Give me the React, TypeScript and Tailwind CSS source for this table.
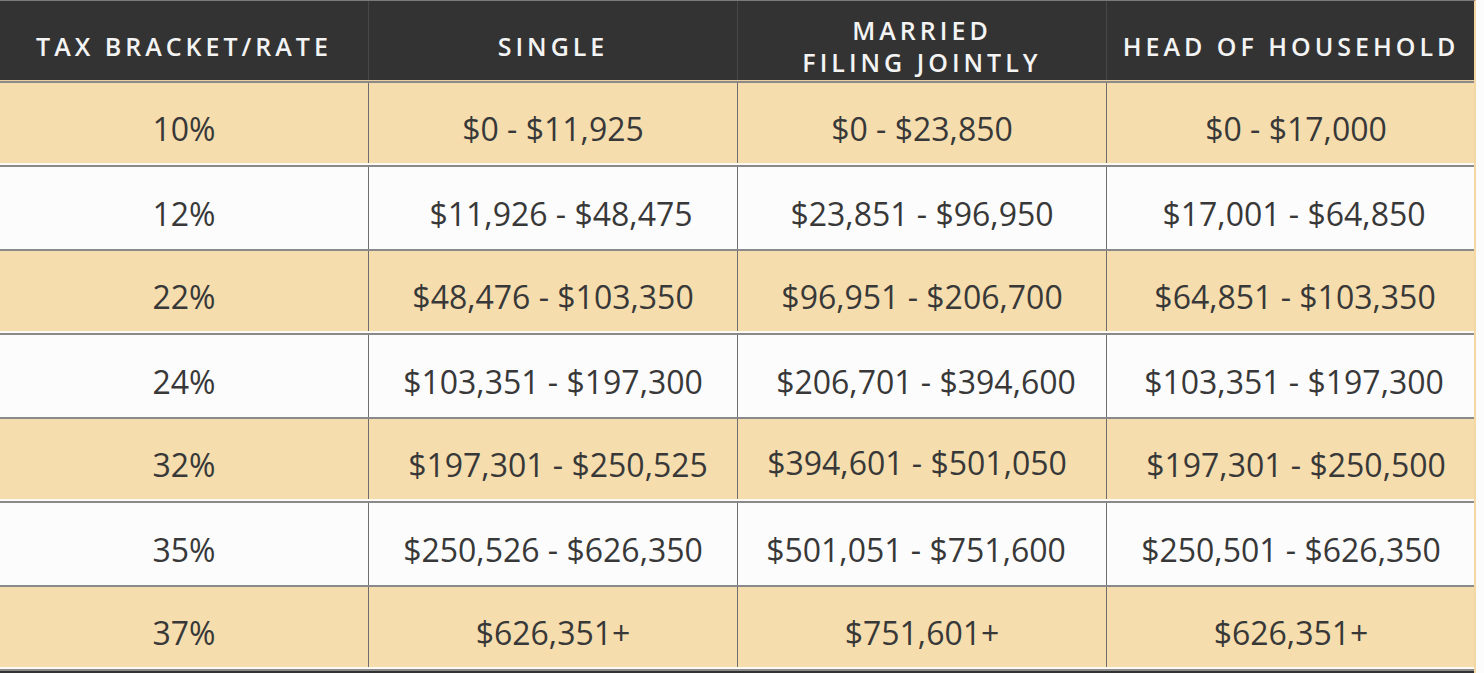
const headers: string[][] = [
  ['TAX BRACKET/RATE'],
  ['SINGLE'],
  ['MARRIED', 'FILING JOINTLY'],
  ['HEAD OF HOUSEHOLD'],
];

const rows: string[][] = [
  ['10%', '$0 - $11,925', '$0 - $23,850', '$0 - $17,000'],
  ['12%', '$11,926 - $48,475', '$23,851 - $96,950', '$17,001 - $64,850'],
  ['22%', '$48,476 - $103,350', '$96,951 - $206,700', '$64,851 - $103,350'],
  ['24%', '$103,351 - $197,300', '$206,701 - $394,600', '$103,351 - $197,300'],
  ['32%', '$197,301 - $250,525', '$394,601 - $501,050', '$197,301 - $250,500'],
  ['35%', '$250,526 - $626,350', '$501,051 - $751,600', '$250,501 - $626,350'],
  ['37%', '$626,351+', '$751,601+', '$626,351+'],
];

// small nudges so the figures sit where they do in the source sheet
const nudge: Record<string, string> = {
  '1-1': 'pl-[16px]',
  '4-1': 'pl-[10px]',
  '3-2': 'pl-[8px]',
  '4-2': 'pr-[10px] pb-[4px]',
  '5-2': 'pr-[12px]',
  '0-3': 'pl-[10px]',
  '1-3': 'pl-[6px]',
  '2-3': 'pl-[8px]',
  '3-3': 'pl-[6px]',
  '4-3': 'pl-[10px]',
};

const cols = 'grid grid-cols-[368px_369px_369px_369px]';

export default function App() {
  return (
    <div className="h-[673px] w-[1484px] overflow-hidden bg-[#fcfcfc] font-['Open_Sans',sans-serif]">
      <div className="w-[1476px] border-t border-[#7a7a7a] border-r-2 border-r-[#f3d7a4]">
        {/* header */}
        <div className={`${cols} h-[80px] bg-[#333333] border-b border-[#e9cf9f]`}>
          {headers.map((lines, i) => (
            <div
              key={i}
              className={`flex flex-col items-center justify-center pt-[11px] text-[25px] font-semibold leading-[32px] tracking-[0.16em] text-[#f4f4f4] ${
                i > 0 ? 'border-l border-[#474747]' : ''
              }`}
            >
              {lines.map((l) => (
                <span key={l}>{l}</span>
              ))}
            </div>
          ))}
        </div>

        {/* body */}
        {rows.map((row, r) => (
          <div
            key={r}
            className={`${cols} h-[84px] border-t-2 border-[#8a8a8a] ${
              r % 2 === 0 ? 'bg-[#f5ddae] border-b-2 border-b-[#fdfaf3]' : 'bg-[#fcfcfc]'
            }`}
          >
            {row.map((cell, c) => (
              <div
                key={c}
                className={`flex items-center justify-center pt-[11px] text-[32px] leading-none text-[#383838] ${
                  c > 0 ? 'border-l border-[#6e6e6e]' : ''
                } ${nudge[`${r}-${c}`] ?? ''}`}
              >
                {cell}
              </div>
            ))}
          </div>
        ))}
        <div className="h-[4px] border-t-2 border-[#8a8a8a] bg-[#333333]" />
      </div>
    </div>
  );
}
